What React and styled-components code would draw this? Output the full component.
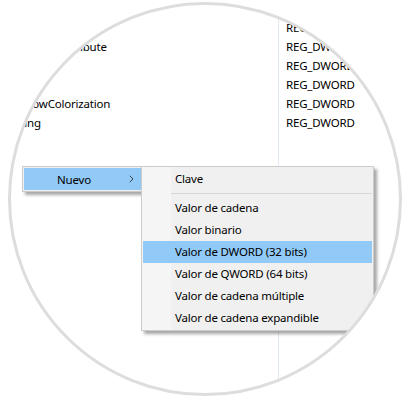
import React from "react";
import styled, { createGlobalStyle } from "styled-components";

const GlobalStyle = createGlobalStyle`
  html, body {
    margin: 0;
    padding: 0;
    background: #ffffff;
  }
  body {
    font-family: "Noto Sans", "Open Sans", sans-serif;
  }
`;

const rows = [
  { name: "ColorizationColorBalance", type: "REG_DWORD" },
  { name: "ColorizationGlassAttribute", type: "REG_DWORD" },
  { name: "ColorPrevalence", type: "REG_DWORD" },
  { name: "Composition", type: "REG_DWORD" },
  { name: "EnableWindowColorization", type: "REG_DWORD" },
  { name: "EnablePolling", type: "REG_DWORD" },
];

const subItems = [
  { label: "Valor de cadena" },
  { label: "Valor binario" },
  { label: "Valor de DWORD (32 bits)", active: true },
  { label: "Valor de QWORD (64 bits)" },
  { label: "Valor de cadena múltiple" },
  { label: "Valor de cadena expandible" },
];

const Chevron = () => (
  <svg width="5" height="8" viewBox="0 0 5 8">
    <path d="M0.8 0.8 L4 4 L0.8 7.2" fill="none" stroke="#444" strokeWidth="1" />
  </svg>
);

const App = () => {
  return (
    <>
      <GlobalStyle />
      <Page>
        <Window>
          <List>
            <NameCol>
              {rows.map((r) => (
                <Cell key={r.name}>{r.name}</Cell>
              ))}
            </NameCol>
            <TypeCol>
              {rows.map((r, i) => (
                <Cell key={i}>{r.type}</Cell>
              ))}
            </TypeCol>
          </List>

          <ContextMenu>
            <ParentItem>
              <span>Nuevo</span>
              <Chevron />
            </ParentItem>
          </ContextMenu>

          <SubMenu>
            <MenuItem>Clave</MenuItem>
            <Separator />
            {subItems.map((it) => (
              <MenuItem key={it.label} $active={it.active}>
                {it.label}
              </MenuItem>
            ))}
          </SubMenu>
        </Window>
      </Page>
    </>
  );
};

const Page = styled.div`
  position: relative;
  width: 410px;
  height: 399px;
  overflow: hidden;
  background: #ffffff;

  &::after {
    content: "";
    position: absolute;
    left: 8px;
    top: 2px;
    width: 388px;
    height: 388px;
    border: 3px solid #dddddd;
    border-radius: 50%;
    pointer-events: none;
  }
`;

const Window = styled.div`
  position: relative;
  width: 410px;
  height: 399px;
  background: #ffffff;
  clip-path: circle(195px at 205px 199px);
  font-size: 11.5px;
  letter-spacing: -0.2px;
  color: #000000;
`;

const List = styled.div`
  display: flex;
  height: 100%;
  margin-left: -30px;
`;

const NameCol = styled.div`
  display: flex;
  flex-direction: column;
  width: 309px;
  padding-top: 18px;
  border-right: 1px solid #e3e9f0;
  box-sizing: border-box;
  white-space: nowrap;
  overflow: hidden;
`;

const TypeCol = styled.div`
  display: flex;
  flex-direction: column;
  padding-top: 18px;
  padding-left: 7px;
`;

const Cell = styled.div`
  height: 19px;
  line-height: 19px;
  white-space: nowrap;
`;

const ContextMenu = styled.div`
  position: absolute;
  left: 22px;
  top: 166px;
  width: 124px;
  padding: 1px;
  border: 1px solid #cccccc;
  background: #f0f0f0;
  box-shadow: 3px 3px 3px rgba(0, 0, 0, 0.35);
`;

const ParentItem = styled.div`
  display: flex;
  align-items: center;
  justify-content: space-between;
  height: 22px;
  padding: 0 14px 0 33px;
  background: #91c9f7;
`;

const SubMenu = styled.div`
  position: absolute;
  left: 141px;
  top: 166px;
  width: 229px;
  padding: 1px;
  border: 1px solid #cccccc;
  background: linear-gradient(to right, #f5f5f5 0 29px, #f0f0f0 29px);
  box-shadow: 3px 3px 3px rgba(0, 0, 0, 0.35);
`;

const MenuItem = styled.div`
  height: 22px;
  line-height: 22px;
  padding-left: 32px;
  white-space: nowrap;
  background: ${(p) => (p.$active ? "#91c9f7" : "transparent")};
`;

const Separator = styled.div`
  height: 1px;
  margin: 3px 0 3px 28px;
  background: #d7d7d7;
`;

export default App;
